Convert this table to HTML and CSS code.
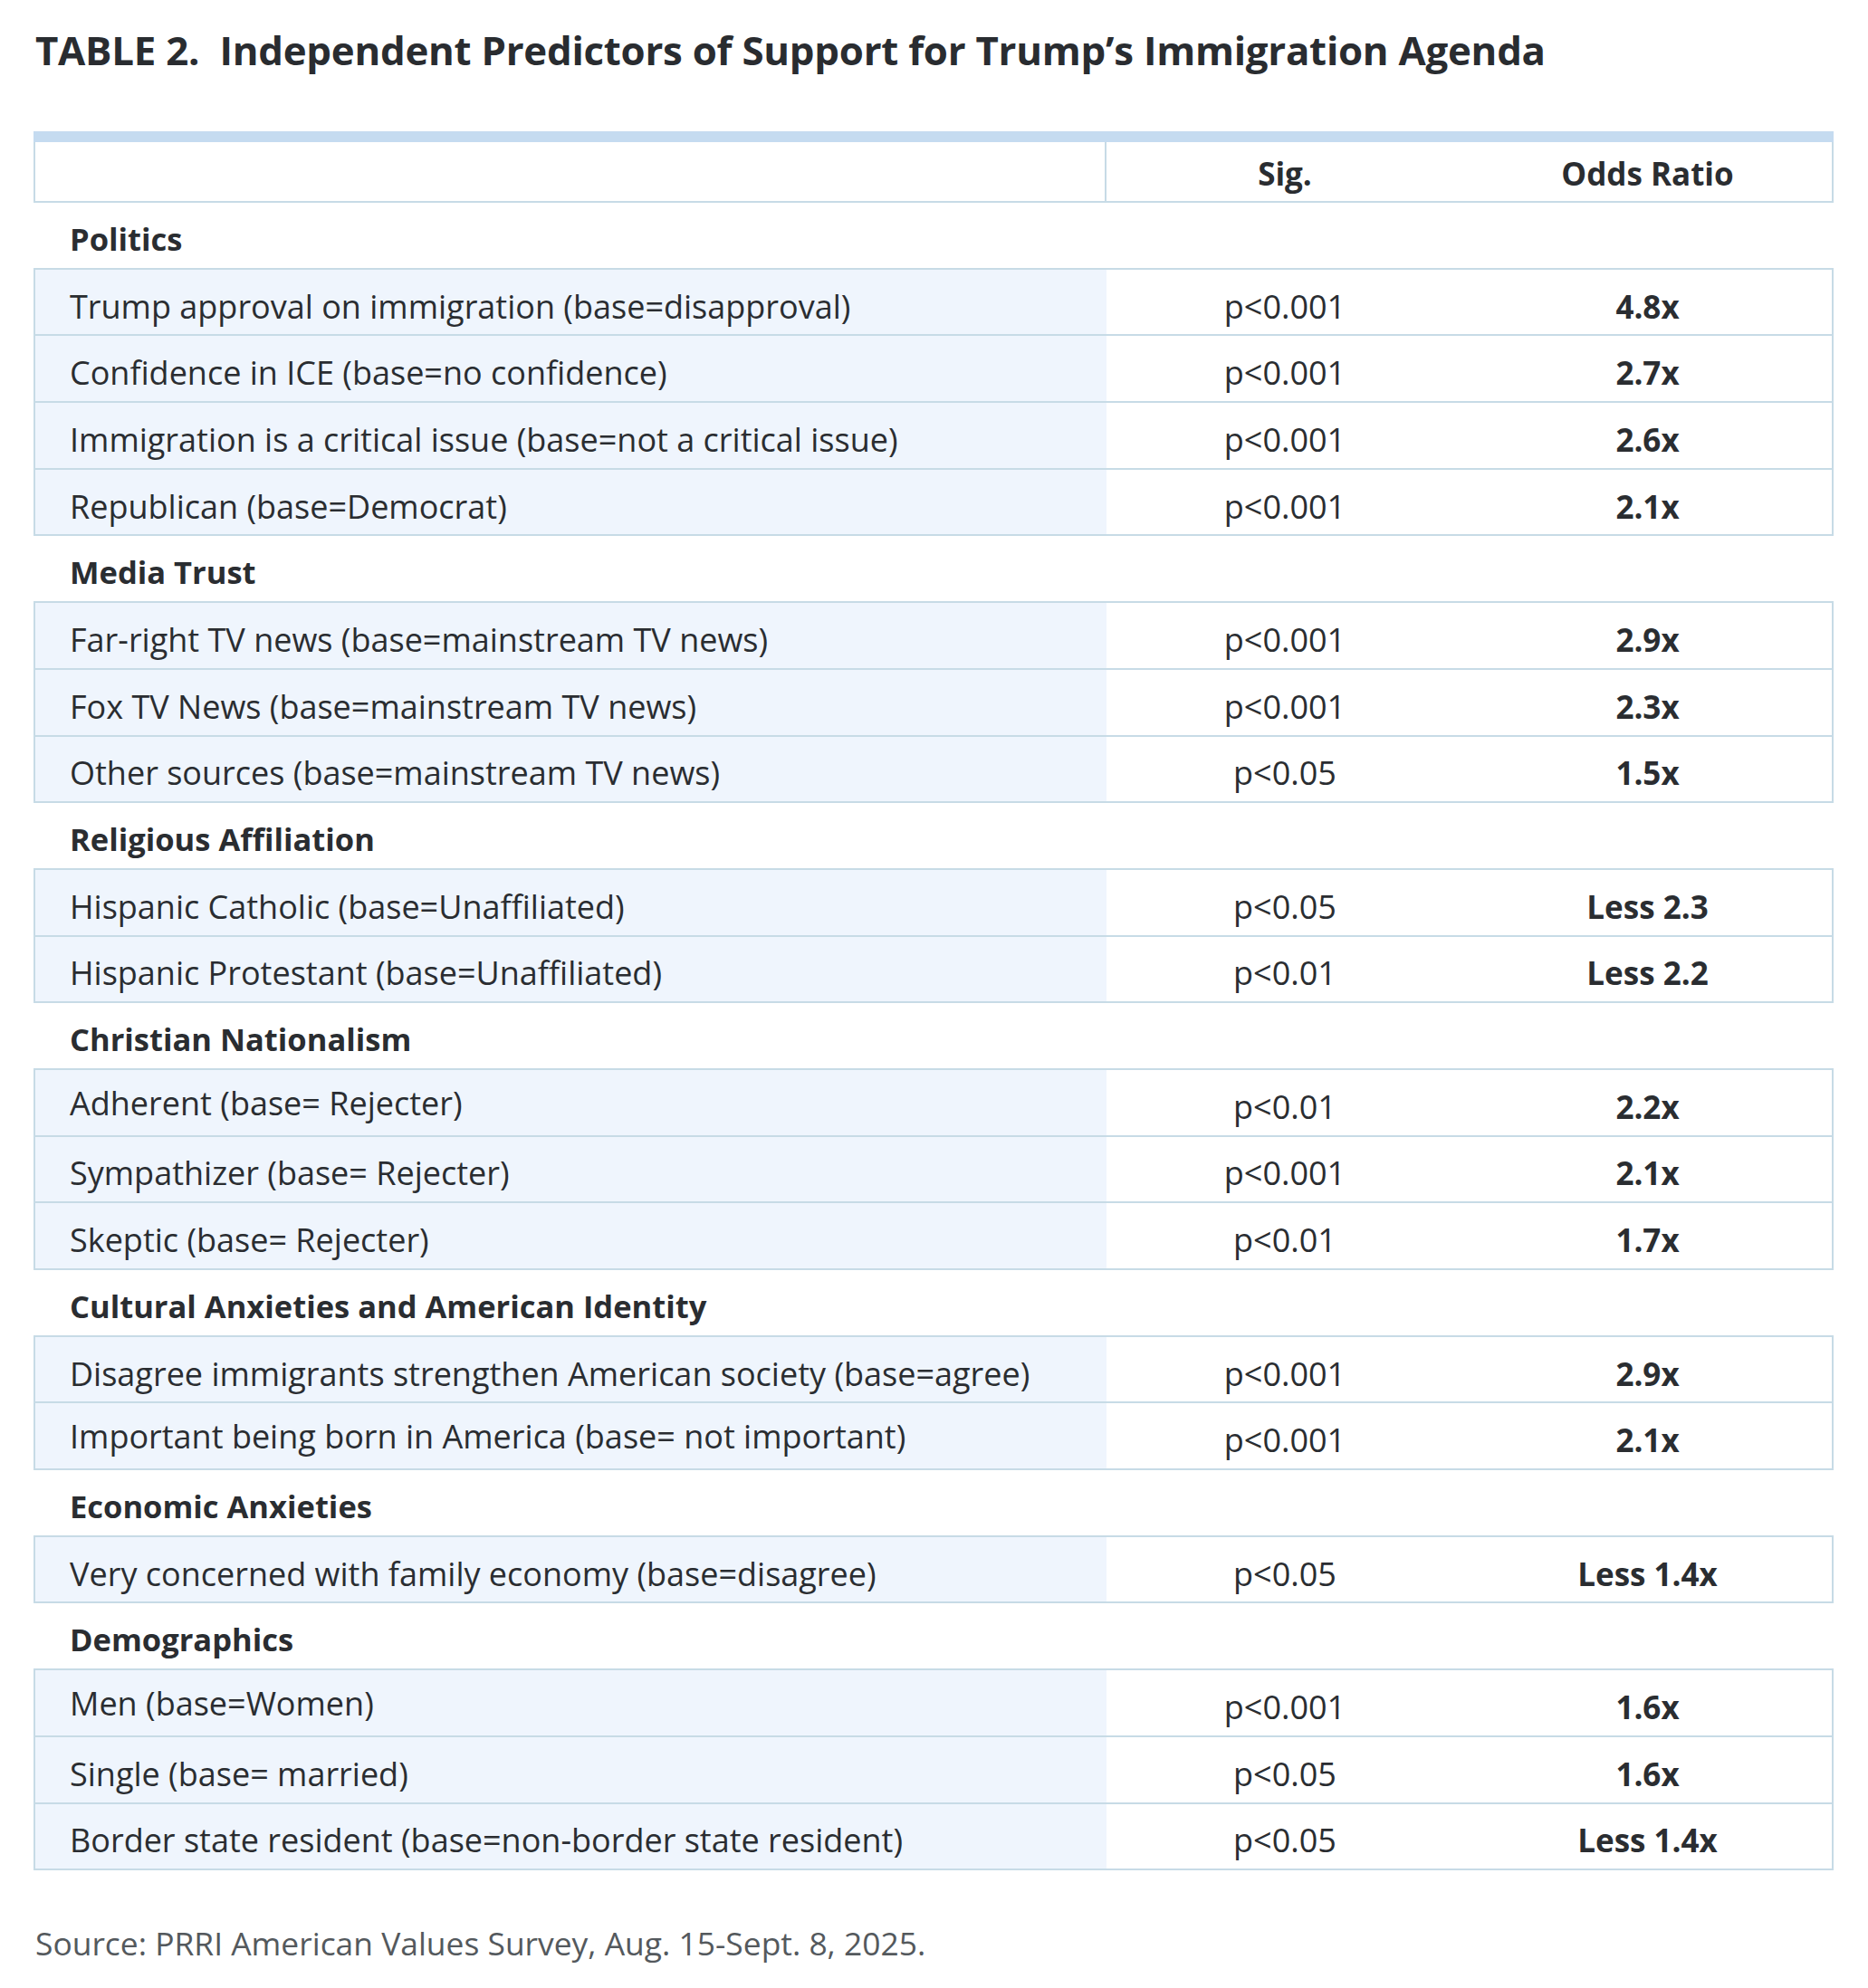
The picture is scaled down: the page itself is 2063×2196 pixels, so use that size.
FILE: index.html
```html
<!DOCTYPE html>
<html lang="en">
<head>
<meta charset="utf-8">
<title>Table 2</title>
<link rel="stylesheet" href="styles.css">
</head>
<body>
<div class="page">
  <h1 class="title">TABLE 2.&nbsp; Independent Predictors of Support for Trump’s Immigration Agenda</h1>
  <div class="table">
    <div class="bar"></div>
    <div class="head">
      <div class="c1"></div>
      <div class="c2">Sig.</div>
      <div class="c3">Odds Ratio</div>
    </div>

    <div class="cat">Politics</div>
    <div class="group">
      <div class="row"><div class="c1">Trump approval on immigration (base=disapproval)</div><div class="c2">p&lt;0.001</div><div class="c3">4.8x</div></div>
      <div class="row"><div class="c1">Confidence in ICE (base=no confidence)</div><div class="c2">p&lt;0.001</div><div class="c3">2.7x</div></div>
      <div class="row"><div class="c1">Immigration is a critical issue (base=not a critical issue)</div><div class="c2">p&lt;0.001</div><div class="c3">2.6x</div></div>
      <div class="row"><div class="c1">Republican (base=Democrat)</div><div class="c2">p&lt;0.001</div><div class="c3">2.1x</div></div>
    </div>

    <div class="cat">Media Trust</div>
    <div class="group">
      <div class="row"><div class="c1">Far-right TV news (base=mainstream TV news)</div><div class="c2">p&lt;0.001</div><div class="c3">2.9x</div></div>
      <div class="row"><div class="c1">Fox TV News (base=mainstream TV news)</div><div class="c2">p&lt;0.001</div><div class="c3">2.3x</div></div>
      <div class="row"><div class="c1">Other sources (base=mainstream TV news)</div><div class="c2">p&lt;0.05</div><div class="c3">1.5x</div></div>
    </div>

    <div class="cat">Religious Affiliation</div>
    <div class="group">
      <div class="row"><div class="c1">Hispanic Catholic (base=Unaffiliated)</div><div class="c2">p&lt;0.05</div><div class="c3">Less 2.3</div></div>
      <div class="row"><div class="c1">Hispanic Protestant (base=Unaffiliated)</div><div class="c2">p&lt;0.01</div><div class="c3">Less 2.2</div></div>
    </div>

    <div class="cat">Christian Nationalism</div>
    <div class="group">
      <div class="row"><div class="c1 hi">Adherent (base= Rejecter)</div><div class="c2">p&lt;0.01</div><div class="c3">2.2x</div></div>
      <div class="row"><div class="c1">Sympathizer (base= Rejecter)</div><div class="c2">p&lt;0.001</div><div class="c3">2.1x</div></div>
      <div class="row"><div class="c1">Skeptic (base= Rejecter)</div><div class="c2">p&lt;0.01</div><div class="c3">1.7x</div></div>
    </div>

    <div class="cat">Cultural Anxieties and American Identity</div>
    <div class="group">
      <div class="row"><div class="c1">Disagree immigrants strengthen American society (base=agree)</div><div class="c2">p&lt;0.001</div><div class="c3">2.9x</div></div>
      <div class="row"><div class="c1 hi">Important being born in America (base= not important)</div><div class="c2">p&lt;0.001</div><div class="c3">2.1x</div></div>
    </div>

    <div class="cat">Economic Anxieties</div>
    <div class="group">
      <div class="row"><div class="c1">Very concerned with family economy (base=disagree)</div><div class="c2">p&lt;0.05</div><div class="c3">Less 1.4x</div></div>
    </div>

    <div class="cat">Demographics</div>
    <div class="group">
      <div class="row"><div class="c1 hi">Men (base=Women)</div><div class="c2">p&lt;0.001</div><div class="c3">1.6x</div></div>
      <div class="row"><div class="c1">Single (base= married)</div><div class="c2">p&lt;0.05</div><div class="c3">1.6x</div></div>
      <div class="row"><div class="c1">Border state resident (base=non-border state resident)</div><div class="c2">p&lt;0.05</div><div class="c3">Less 1.4x</div></div>
    </div>
  </div>
  <p class="source">Source: PRRI American Values Survey, Aug. 15-Sept. 8, 2025.</p>
</div>
</body>
</html>
```

FILE: styles.css
```css
html, body {
  margin: 0;
  padding: 0;
  background: #ffffff;
}

.page {
  font-family: "Open Sans", "Noto Sans", sans-serif;
  color: #2a2d31;
  padding: 0 38px 0 37px;
  width: 2063px;
  box-sizing: border-box;
}

.title {
  margin: 0;
  padding-top: 22px;
  font-size: 43.8px;
  font-weight: 700;
  line-height: 66px;
  letter-spacing: -0.25px;
  color: #292c30;
  padding-left: 2px;
}

.table {
  margin-top: 57px;
  width: 1988px;
}

.bar {
  height: 12px;
  background: #c5dbf0;
}

.head {
  display: flex;
  height: 67px;
  box-sizing: border-box;
  border: 2px solid #c7dbe6;
  border-top: none;
  font-weight: 700;
  font-size: 35px;
}

.head .c1 {
  border-right: 2px solid #c7dbe6;
}

.head > div {
  display: flex;
  align-items: center;
  padding-top: 4px;
  box-sizing: border-box;
}

.c1 {
  width: 1183px;
  flex: none;
  padding-left: 38px;
  box-sizing: border-box;
}

.c2 {
  width: 394px;
  flex: none;
  justify-content: center;
  text-align: center;
}

.c3 {
  flex: 1;
  justify-content: center;
  text-align: center;
  font-weight: 700;
  font-size: 35px;
}

.cat {
  height: 71.7px;
  box-sizing: border-box;
  padding-left: 40px;
  padding-top: 7px;
  display: flex;
  align-items: center;
  font-size: 34.5px;
  font-weight: 700;
}

.group {
  border: 2px solid #c7dbe6;
  border-bottom: none;
}

.row {
  display: flex;
  height: 73.7px;
  box-sizing: border-box;
  border-bottom: 2px solid #c7dbe6;
  font-size: 36px;
}

.row > div {
  display: flex;
  align-items: center;
  padding-top: 9px;
  box-sizing: border-box;
}

.row .c1 {
  background: #eff5fd;
}

.row .c1.hi {
  padding-top: 1px;
}

.source {
  margin: 0;
  padding-top: 56px;
  padding-left: 2px;
  font-size: 35.4px;
  color: #54595d;
  line-height: 48px;
}
```
